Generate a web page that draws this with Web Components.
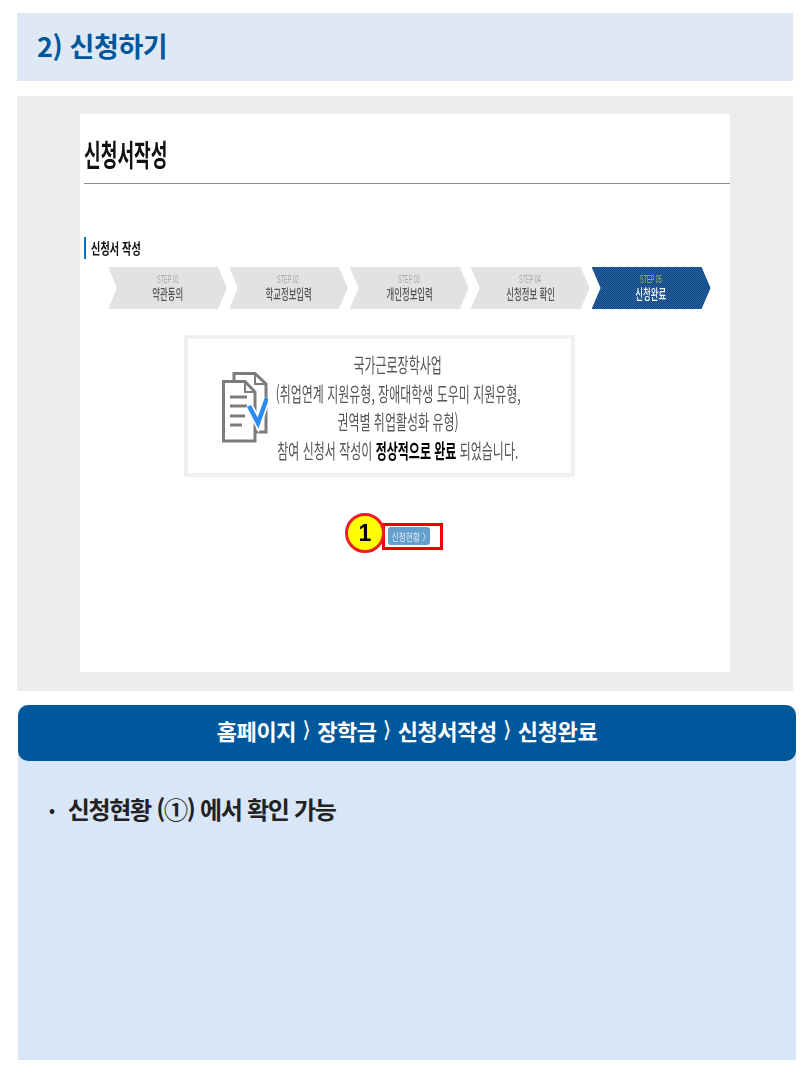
<!DOCTYPE html>
<html lang="ko">
<head>
<meta charset="utf-8">
<title>신청하기</title>
<style>
  html, body { margin: 0; background: #fff; }
  body { font-family: "Noto Sans CJK KR", "Noto Sans", sans-serif; width: 810px; height: 1080px; overflow: hidden; }
</style>
</head>
<body>
<guide-page>
  <section-title>2) 신청하기</section-title>
  <shot-panel>
    <form-shot></form-shot>
  </shot-panel>
  <info-box path="홈페이지,장학금,신청서작성,신청완료">
    <li>신청현황 (①) 에서 확인 가능</li>
  </info-box>
</guide-page>

<script>
class GuidePage extends HTMLElement{
    constructor(){
        super();
        this.attachShadow({ mode: 'open' });
        this.shadowRoot.innerHTML = `
            <style>
                :host{
                    display: flex;
                    flex-direction: column;
                    padding-top: 13px;
                }
            </style>
            <slot></slot>
        `;
    }
}

class SectionTitle extends HTMLElement{
    constructor(){
        super();
        this.attachShadow({ mode: 'open' });
        this.shadowRoot.innerHTML = `
            <style>
                :host{
                    display: flex;
                    align-items: center;
                    box-sizing: border-box;
                    width: 776px;
                    height: 68px;
                    margin-left: 17px;
                    padding: 0 0 4px 20px;
                    background: #dfe9f6;
                    color: #00569b;
                    font-size: 27px;
                    font-weight: 700;
                    letter-spacing: -0.4px;
                }
            </style>
            <slot></slot>
        `;
    }
}

class ShotPanel extends HTMLElement{
    constructor(){
        super();
        this.attachShadow({ mode: 'open' });
        this.shadowRoot.innerHTML = `
            <style>
                :host{
                    display: block;
                    box-sizing: border-box;
                    width: 776px;
                    height: 595px;
                    margin: 15px 0 0 17px;
                    padding: 18px 63px 19px;
                    background: #ededed;
                }
            </style>
            <slot></slot>
        `;
    }
}

class StepArrow extends HTMLElement{
    constructor(){
        super();
        this.attachShadow({ mode: 'open' });
        this.shadowRoot.innerHTML = `
            <style>
                :host{
                    display: flex;
                    flex-direction: column;
                    align-items: center;
                    box-sizing: border-box;
                    width: 119px;
                    height: 42px;
                    padding-top: 7px;
                    background: #e2e2e2;
                    clip-path: polygon(0 0, 110px 0, 119px 50%, 110px 100%, 0 100%, 9px 50%);
                    color: #555;
                }
                :host([active]){
                    background: repeating-conic-gradient(#14457f 0 25%, #2463a6 0 50%) 0 0 / 2px 2px;
                    color: #fff;
                }
                .no{
                    font-family: "Liberation Sans", sans-serif;
                    font-size: 11px;
                    line-height: 10px;
                    color: #a8a8a8;
                    transform: scaleX(.5);
                    white-space: nowrap;
                }
                :host([active]) .no{ color: #9bc04a; }
                .name{
                    font-size: 14px;
                    font-weight: 500;
                    line-height: 17px;
                    margin-top: 1px;
                    white-space: nowrap;
                    transform: scaleX(.6);
                }
            </style>
            <span class="no"></span>
            <span class="name"><slot></slot></span>
        `;
    }

    connectedCallback(){
        this.shadowRoot.querySelector(".no").textContent = this.getAttribute("no");
    }
}

class FormShot extends HTMLElement{
    constructor(){
        super();
        this.attachShadow({ mode: 'open' });
        this.shadowRoot.innerHTML = `
            <style>
                :host{
                    display: block;
                    box-sizing: border-box;
                    width: 650px;
                    height: 558px;
                    background: #fff;
                    color: #111;
                    filter: blur(.35px);
                }
                h1{
                    margin: 0 0 0 4px;
                    padding-top: 21px;
                    height: 48px;
                    font-size: 30px;
                    line-height: 36px;
                    font-weight: 700;
                    transform: scaleX(.605);
                    transform-origin: left;
                    white-space: nowrap;
                }
                hr{
                    margin: 0 0 0 4px;
                    border: 0;
                    border-top: 1px solid #8b8b92;
                }
                h2{
                    margin: 53px 0 0 4px;
                    height: 22px;
                    border-left: 2px solid #0b72c4;
                    padding-left: 5px;
                    font-size: 15px;
                    line-height: 22px;
                    font-weight: 700;
                    white-space: nowrap;
                }
                h2 span{ display: inline-block; transform: scaleX(.68); transform-origin: left; }
                .steps{
                    display: flex;
                    gap: 1.9px;
                    margin: 8px 0 0 28px;
                }
                .done{
                    display: flex;
                    align-items: center;
                    box-sizing: border-box;
                    width: 391px;
                    height: 142px;
                    margin: 26px 0 0 104px;
                    border: 4px solid #f0f0f0;
                    color: #555;
                }
                .done svg{ margin: 3px 0 0 34px; flex: none; }
                .msg{
                    display: flex;
                    flex-direction: column;
                    align-items: center;
                    flex: none;
                    width: 260px;
                    margin-top: 4px;
                    font-size: 20px;
                    line-height: 28.5px;
                    white-space: nowrap;
                }
                .msg div{ transform: scaleX(.6); }
                .msg b{ color: #000; font-weight: 700; }
                .action{
                    display: flex;
                    align-items: flex-start;
                    margin: 36px 0 0 265px;
                }
                .num{
                    display: flex;
                    align-items: center;
                    justify-content: center;
                    box-sizing: border-box;
                    width: 40px;
                    height: 40px;
                    border: 3px solid #ee1c25;
                    border-radius: 50%;
                    background: #ffff00;
                    color: #000;
                    font-family: "Liberation Sans", sans-serif;
                    font-size: 23px;
                    font-weight: 700;
                    position: relative;
                    z-index: 1;
                }
                .hilite{
                    box-sizing: border-box;
                    width: 61px;
                    height: 27px;
                    margin: 10px 0 0 -3px;
                    border: 3px solid #ee0000;
                    padding: 1px 0 0 3px;
                }
                .btn{
                    display: flex;
                    align-items: center;
                    justify-content: center;
                    width: 42px;
                    height: 18px;
                    border-radius: 3px;
                    background: #64a0cd;
                    color: #dfeaf3;
                    font-size: 10px;
                    white-space: nowrap;
                }
                .btn span{ transform: translateX(2px) scaleX(.78); }
            </style>
            <h1>신청서작성</h1>
            <hr>
            <h2><span>신청서 작성</span></h2>
            <div class="steps">
                <step-arrow no="STEP 01">약관동의</step-arrow>
                <step-arrow no="STEP 02">학교정보입력</step-arrow>
                <step-arrow no="STEP 03">개인정보입력</step-arrow>
                <step-arrow no="STEP 04">신청정보 확인</step-arrow>
                <step-arrow no="STEP 05" active>신청완료</step-arrow>
            </div>
            <div class="done">
                <svg width="46" height="72" viewBox="0 0 46 72">
                    <path d="M12 8V1.500H33L44 12V60H34" fill="none" stroke="#7c7c7c" stroke-width="3"/>
                    <path d="M33 1.500V12H44" fill="none" stroke="#7c7c7c" stroke-width="2"/>
                    <path d="M1.500 9.500H23L33 20V69H1.500Z" fill="#fff" stroke="#7c7c7c" stroke-width="3"/>
                    <path d="M23 9.500V20H33" fill="none" stroke="#7c7c7c" stroke-width="2"/>
                    <path d="M8 25H25M8 34H25M8 44H23M8 53H20" stroke="#7c7c7c" stroke-width="3"/>
                    <path d="M27 34L36 51L45 26" fill="none" stroke="#fff" stroke-width="8"/>
                    <path d="M27 34L36 51L45 26" fill="none" stroke="#2a8cf0" stroke-width="4.500"/>
                </svg>
                <div class="msg">
                    <div>국가근로장학사업</div>
                    <div>(취업연계 지원유형, 장애대학생 도우미 지원유형,</div>
                    <div>권역별 취업활성화 유형)</div>
                    <div>참여 신청서 작성이 <b>정상적으로 완료</b> 되었습니다.</div>
                </div>
            </div>
            <div class="action">
                <span class="num">1</span>
                <div class="hilite"><div class="btn"><span>신청현황 〉</span></div></div>
            </div>
        `;
    }
}

class InfoBox extends HTMLElement{
    constructor(){
        super();
        this.attachShadow({ mode: 'open' });
        this.shadowRoot.innerHTML = `
            <style>
                :host{
                    display: block;
                    width: 778px;
                    height: 355px;
                    margin: 14px 0 0 18px;
                    background: #d9e6f7;
                    border-radius: 10px 10px 0 0;
                }
                .bar{
                    display: flex;
                    align-items: center;
                    justify-content: center;
                    box-sizing: border-box;
                    height: 56px;
                    padding-bottom: 7px;
                    border-radius: 10px;
                    background: #00589c;
                    color: #fff;
                    font-size: 22px;
                    font-weight: 700;
                    letter-spacing: -0.4px;
                    white-space: nowrap;
                }
                .sep{
                    width: 21px;
                    text-align: center;
                    font-family: "DejaVu Sans", sans-serif;
                    font-weight: 400;
                    letter-spacing: 0;
                }
                ul{
                    margin: 0;
                    padding: 31px 0 0 31px;
                    list-style: none;
                    font-size: 24px;
                    line-height: 34px;
                    font-weight: 700;
                    color: #222;
                    letter-spacing: -1.3px;
                }
                ::slotted(li){
                    display: flex;
                    gap: 14px;
                    white-space: pre;
                }
                ::slotted(li)::before{
                    content: "•";
                    font-size: 16px;
                }
            </style>
            <div class="bar"></div>
            <ul><slot></slot></ul>
        `;
    }

    connectedCallback(){
        let parts = this.getAttribute("path").split(",");
        this.shadowRoot.querySelector(".bar").innerHTML = parts.map(p => `<span>${p}</span>`).join('<span class="sep">⟩</span>');
    }
}

customElements.define('guide-page', GuidePage);
customElements.define('section-title', SectionTitle);
customElements.define('shot-panel', ShotPanel);
customElements.define('step-arrow', StepArrow);
customElements.define('form-shot', FormShot);
customElements.define('info-box', InfoBox);
</script>
</body>
</html>
